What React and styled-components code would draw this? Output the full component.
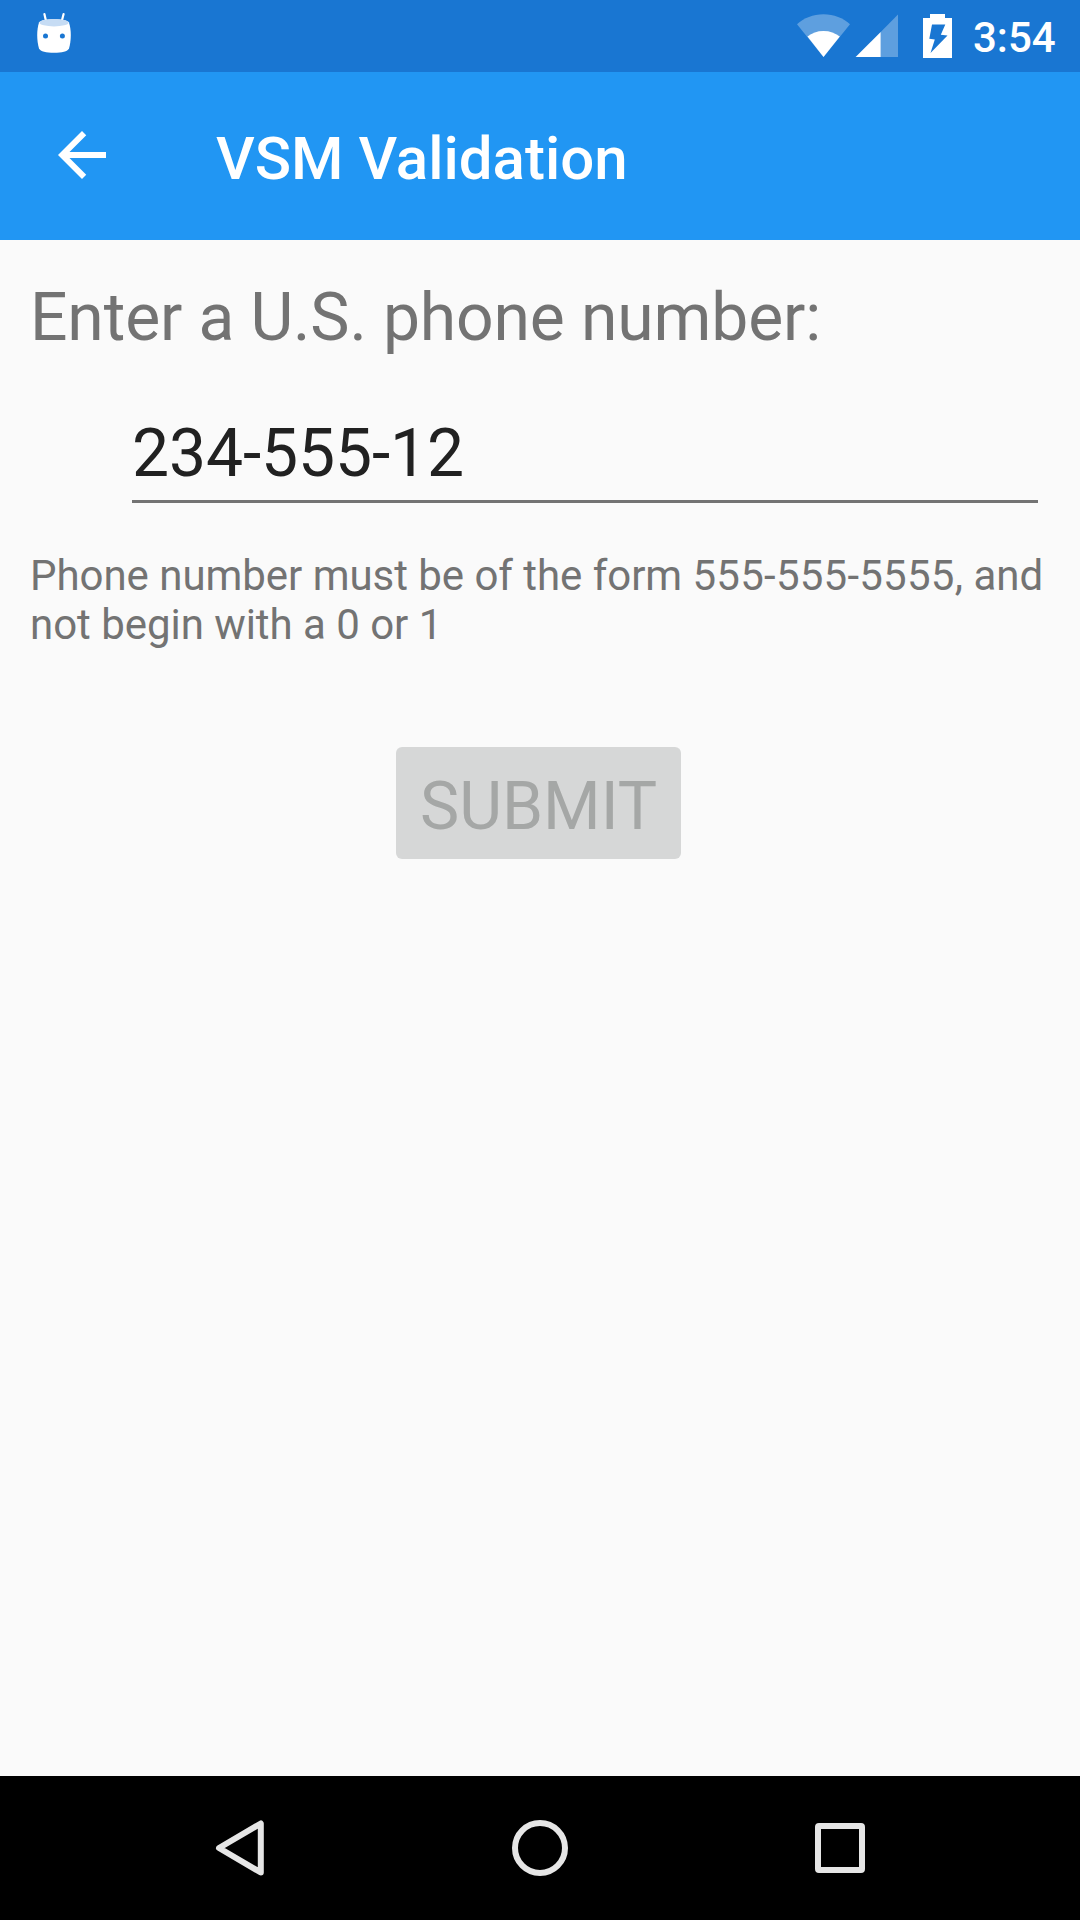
import React from "react";
import styled, { createGlobalStyle } from "styled-components";

const GlobalStyle = createGlobalStyle`
  body {
    margin: 0;
    background: #fafafa;
    font-family: Roboto, "Noto Sans", sans-serif;
  }
`;

const Screen = styled.div`
  display: flex;
  flex-direction: column;
  width: 1080px;
  height: 1920px;
  background: #fafafa;
  overflow: hidden;
`;

const StatusBar = styled.header`
  display: flex;
  align-items: flex-start;
  justify-content: space-between;
  height: 72px;
  flex: none;
  background: #1976d2;
  padding: 0 24px 0 30px;
  box-sizing: border-box;
`;

const StatusGroup = styled.div`
  display: flex;
  align-items: flex-start;
`;

const Icon = styled.svg`
  display: block;
  flex: none;
`;

const Clock = styled.span`
  width: 83px;
  margin-left: 13px;
  padding-top: 1px;
  font-size: 42px;
  font-weight: 500;
  line-height: 73px;
  color: #fff;
  white-space: nowrap;
`;

const AppBar = styled.div`
  display: flex;
  align-items: flex-start;
  height: 168px;
  flex: none;
  padding: 47px 46px 0;
  box-sizing: border-box;
  background: #2196f3;
`;

const BackButton = styled.button`
  padding: 0;
  border: 0;
  background: none;
`;

const Title = styled.h1`
  margin: 4px 0 0 98px;
  font-size: 60px;
  font-weight: 500;
  line-height: 72px;
  color: #fff;
`;

const Form = styled.main`
  display: flex;
  flex-direction: column;
  flex: 1;
  padding: 39px 30px 0;
`;

const Label = styled.div`
  font-size: 66px;
  line-height: 78px;
  letter-spacing: -0.14px;
  color: #737373;
`;

const Field = styled.div`
  margin: 58px 12px 0 102px;
  padding-bottom: 7px;
  border-bottom: 3px solid #737373;
  font-size: 66px;
  line-height: 78px;
  letter-spacing: -0.12px;
  color: #212121;
`;

const Hint = styled.p`
  margin: 48px 0 0;
  font-size: 42px;
  line-height: 49px;
  letter-spacing: -0.04px;
  color: #737373;
  white-space: nowrap;
`;

const Digits = styled.span`
  letter-spacing: 0.24px;
`;

const Submit = styled.button`
  align-self: center;
  width: 285px;
  height: 112px;
  margin: 98px 3px 0 0;
  padding: 8px 0 0;
  border: 0;
  border-radius: 6px;
  background: #d6d7d7;
  font-family: inherit;
  font-size: 66px;
  line-height: 78px;
  color: #a5a7a6;
`;

const NavBar = styled.nav`
  display: flex;
  justify-content: center;
  height: 144px;
  flex: none;
  background: #000;
`;

const NavButton = styled.button`
  display: flex;
  align-items: center;
  justify-content: center;
  width: 300px;
  padding: 0;
  border: 0;
  background: none;
`;

const NavIcon = ({ children }) => (
  <Icon width="72" height="72" viewBox="0 0 72 72" fill="none" stroke="#e6e6e6" strokeWidth="6" strokeLinejoin="round">
    {children}
  </Icon>
);

export default function App() {
  return (
    <>
      <GlobalStyle />
      <Screen>
        <StatusBar>
          <Icon width="48" height="72" viewBox="30 0 48 72">
            <path d="M44.4 14L46 21M63.6 14L61.8 21" stroke="#fff" strokeWidth="2.2" strokeLinecap="round" />
            <path d="M39 22.5C41 18 67 18 69 22.5C71.4 30 71.4 40 69 48.5C67.5 51.5 62 52.8 54 52.8S40.5 51.5 39 48.5C36.6 40 36.6 30 39 22.5Z" fill="#fff" />
            <ellipse cx="54" cy="22.7" rx="14.5" ry="3.7" fill="#c6dcf4" />
            <circle cx="45.5" cy="36" r="2.5" fill="#1976d2" />
            <circle cx="62.4" cy="36" r="2.5" fill="#1976d2" />
          </Icon>
          <StatusGroup>
            <Icon width="164" height="72" viewBox="796 0 164 72">
              <path d="M823.5 57L797 24.2C804 18 813 14.3 823.5 14.3S843 18 850 24.2Z" fill="#fff" fillOpacity=".3" />
              <path d="M823.5 57L807.5 36.5C812 33 817 31 823.5 31S835 33 839.8 36.5Z" fill="#fff" />
              <path d="M880.7 32V57H898V14.5Z" fill="#fff" fillOpacity=".3" />
              <path d="M855.6 57L880.7 32V57Z" fill="#fff" />
              <path fillRule="evenodd" fill="#fff" d="M923 18H930V14H945V18H952V58H923ZM932 24.5H945.3L940.8 34.7L947.5 35.5L930.5 53L934.8 39.5L929.3 38.8Z" />
            </Icon>
            <Clock>3:54</Clock>
          </StatusGroup>
        </StatusBar>
        <AppBar>
          <BackButton aria-label="Back">
            <Icon width="72" height="72" viewBox="0 0 24 24">
              <path fill="#fff" d="M20 11H7.83l5.59-5.59L12 4l-8 8 8 8 1.41-1.41L7.83 13H20v-2z" />
            </Icon>
          </BackButton>
          <Title>VSM Validation</Title>
        </AppBar>
        <Form>
          <Label>Enter a U.S. phone number:</Label>
          <Field>234-555-12</Field>
          <Hint>
            Phone number must be of the form <Digits>555-555-5555,</Digits> and
            <br />
            not begin with a 0 or 1
          </Hint>
          <Submit disabled>SUBMIT</Submit>
        </Form>
        <NavBar>
          <NavButton aria-label="Back">
            <NavIcon>
              <path d="M56.8 11.5V60.5L15 36Z" />
            </NavIcon>
          </NavButton>
          <NavButton aria-label="Home">
            <NavIcon>
              <circle cx="36" cy="36" r="25" />
            </NavIcon>
          </NavButton>
          <NavButton aria-label="Overview">
            <NavIcon>
              <rect x="14" y="14" width="44" height="44" rx="1" />
            </NavIcon>
          </NavButton>
        </NavBar>
      </Screen>
    </>
  );
}
